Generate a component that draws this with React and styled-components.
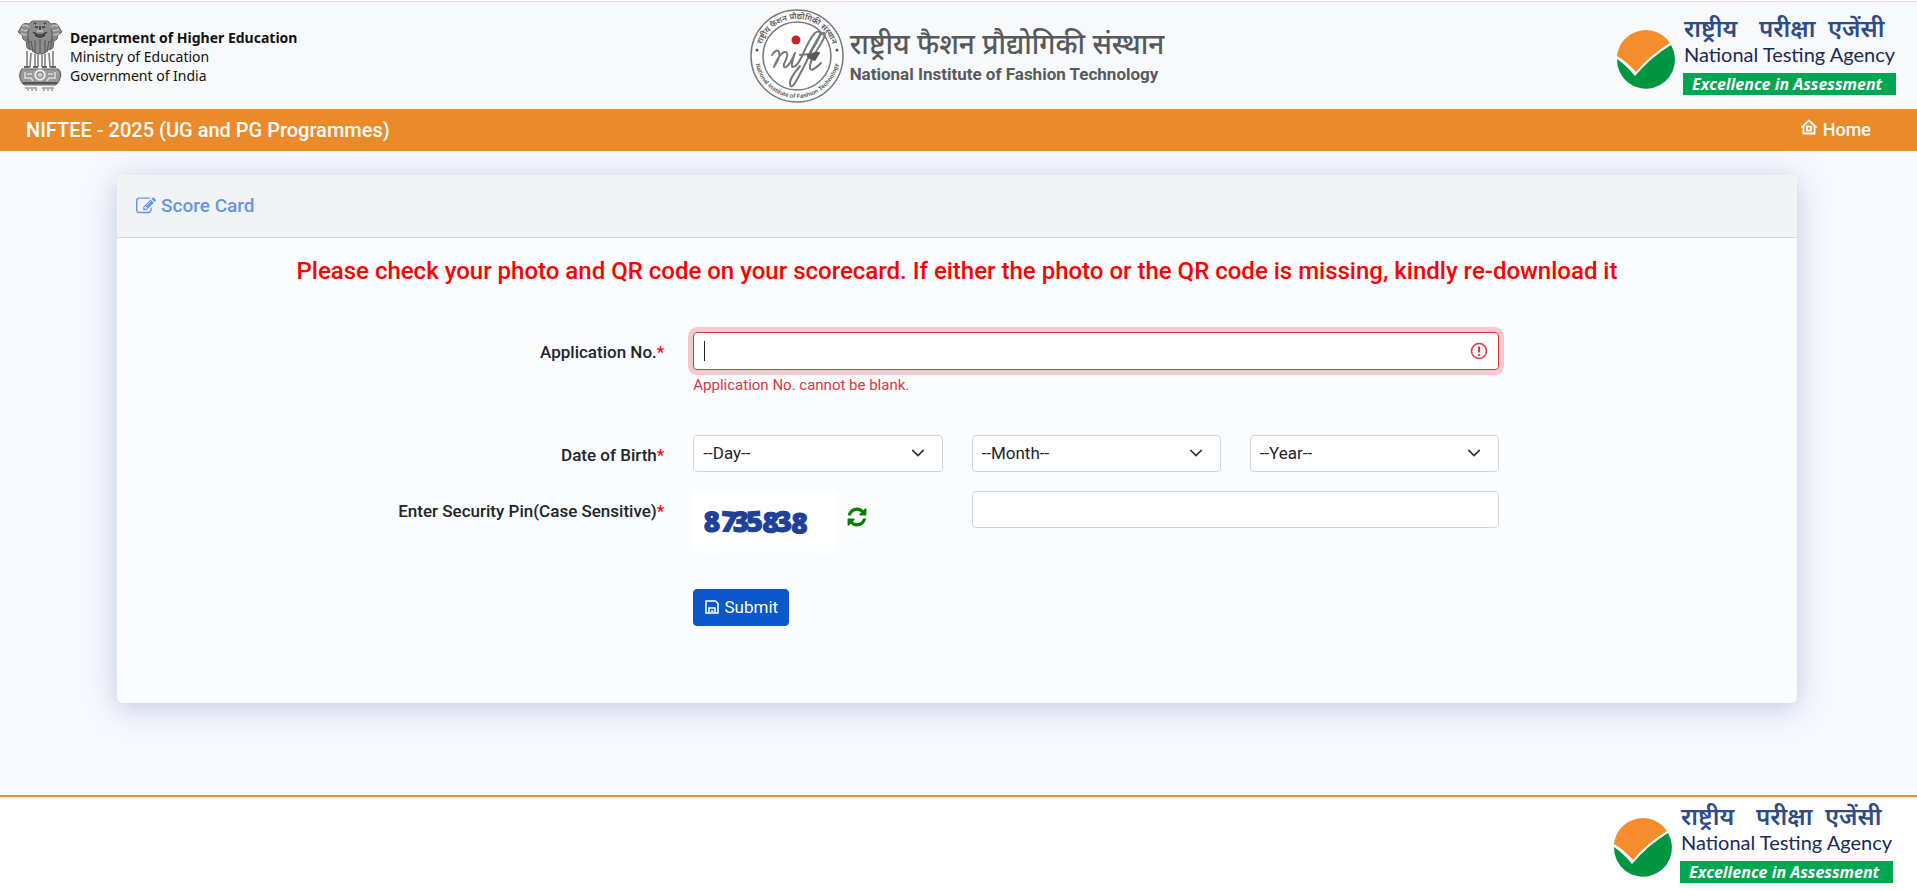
import React from 'react';
import styled, { createGlobalStyle } from 'styled-components';


//-- STYLES --//
const colors = {
  orange: '#eb8a2b',
  ink: '#212529',
  danger: '#dc3545',
  border: '#ced4da',
  link: '#6495ed',
  primary: '#0b57cb',
};

const GlobalStyle = createGlobalStyle`
  *, *::before, *::after {
    box-sizing: border-box;
  }

  body {
    margin: 0;
    background: #f8f9fe;
    color: ${colors.ink};
    font-family: Roboto, 'Liberation Sans', sans-serif;
    font-size: 17px;
    line-height: 24px;
  }
`;

const Page = styled.div`
  display: flex;
  flex-direction: column;
  min-height: 100vh;
`;

const Header = styled.header`
  display: grid;
  grid-template-columns: 1fr auto 1fr;
  align-items: center;
  height: 109px;
  padding: 2px 20px 0 17px;
  border-top: 1px solid #fff;
  background: #f8f9fb;
  box-shadow: inset 0 1px #f0d8ea;
`;

const Ministry = styled.div`
  display: flex;
  align-items: center;
  gap: 7px;
`;

const MinistryText = styled.p`
  margin: 0;
  color: #111;
  font-family: 'Noto Sans', sans-serif;
  font-size: 14px;
  line-height: 19px;
`;

const Institute = styled.div`
  display: flex;
  align-items: center;
  gap: 6px;
`;

const InstituteText = styled.div`
  display: flex;
  flex-direction: column;
  color: #58595b;
`;

const InstituteHindi = styled.span`
  font-family: 'Noto Sans', 'Noto Sans Devanagari', sans-serif;
  font-size: 28px;
  font-weight: 500;
  line-height: 36px;
`;

const InstituteName = styled.span`
  font-family: Roboto, 'Liberation Sans', sans-serif;
  font-size: 17px;
  font-weight: 700;
  line-height: 26px;
`;

const AgencySlot = styled.div`
  display: flex;
  justify-self: end;
  padding-bottom: 3px;
`;

const Bar = styled.nav`
  display: flex;
  align-items: center;
  justify-content: space-between;
  height: 42px;
  padding: 0 46px 0 26px;
  background: ${colors.orange};
  color: #fff;
`;

const BarTitle = styled.h1`
  margin: 0;
  font-size: 20px;
  font-weight: 500;
`;

const HomeLink = styled.a`
  display: flex;
  align-items: center;
  gap: 6px;
  color: #fff;
  font-size: 18px;
  font-weight: 500;
  text-decoration: none;

  svg {
    margin-bottom: 6px;
  }
`;

const Main = styled.main`
  flex: 1;
  padding: 24px 120px 92px 117px;
`;

const Card = styled.section`
  min-height: 528px;
  border-radius: 6px;
  background: #fbfcfe;
  box-shadow: 0 5px 30px rgba(65, 100, 160, .32);
  overflow: hidden;
`;

const CardHeader = styled.h2`
  display: flex;
  align-items: center;
  gap: 5px;
  height: 63px;
  margin: 0;
  padding: 0 19px;
  border-bottom: 1px solid #d3d5d8;
  background: #f2f3f5;
  color: ${colors.link};
  font-size: 19px;
  font-weight: 500;
`;

const Notice = styled.p`
  margin: 18px 0 46px;
  color: #f00;
  font-size: 24px;
  font-weight: 500;
  line-height: 30px;
  text-align: center;
`;

const Form = styled.form`
  padding: 0 20px;
`;

const Row = styled.div`
  display: grid;
  grid-template-columns: repeat(6, 1fr);
  column-gap: 29px;
  align-items: start;
  min-height: ${props => props.$height};
`;

const Label = styled.label`
  grid-column: span 2;
  padding-top: 8px;
  font-weight: 500;
  text-align: right;
`;

const Star = styled.span`
  color: #f00;
`;

const Field = styled.div`
  position: relative;
  grid-column: span ${props => props.$span || 1};
`;

const Input = styled.input`
  display: block;
  width: 100%;
  height: ${props => (props.$invalid ? '38px' : '37px')};
  padding: 6px 11px;
  border: 1px solid ${props => (props.$invalid ? colors.danger : colors.border)};
  border-radius: 4px;
  outline: none;
  background: #fff;
  color: ${colors.ink};
  caret-color: transparent;
  font: inherit;
  box-shadow: ${props => (props.$invalid ? '0 0 0 5px rgba(220, 53, 69, .25)' : 'none')};
`;

// steady caret in place of the browser's blinking one
const Caret = styled.span`
  position: absolute;
  top: 9px;
  left: 11px;
  width: 1px;
  height: 20px;
  background: ${colors.ink};
`;

const InvalidIcon = styled.svg`
  position: absolute;
  top: 10px;
  right: 11px;
`;

const Feedback = styled.div`
  margin-top: 3px;
  color: ${colors.danger};
  font-size: 15px;
`;

const Select = styled.select`
  display: block;
  width: 100%;
  height: 37px;
  padding: 0 36px 2px 9px;
  border: 1px solid ${colors.border};
  border-radius: 4px;
  appearance: none;
  background: #fff;
  color: ${colors.ink};
  font: inherit;
`;

const Chevron = styled.svg`
  position: absolute;
  top: 11px;
  right: 18px;
  pointer-events: none;
`;

const Captcha = styled.div`
  display: flex;
  align-items: flex-start;
  gap: 9px;
`;

const Refresh = styled.button`
  display: flex;
  margin-top: 15px;
  padding: 0;
  border: 0;
  background: none;
  color: green;
  cursor: pointer;
`;

const Submit = styled.button`
  display: flex;
  grid-column: 3;
  align-items: center;
  justify-content: center;
  gap: 6px;
  justify-self: start;
  width: 96px;
  height: 37px;
  padding: 0 0 2px;
  border: 1px solid #0a53c4;
  border-radius: 4px;
  background: ${colors.primary};
  color: #fff;
  font: inherit;
  cursor: pointer;
`;

const Footer = styled.footer`
  display: flex;
  justify-content: flex-end;
  height: 96px;
  padding: 6px 23px 0;
  border-top: 2px solid #ee8c2d;
  background: #fff;
`;


//-- DRAWINGS --//
const Emblem = () => (
  <svg width="46" height="72" viewBox="0 0 46 72" fill="none" stroke="#666" role="img" aria-label="Emblem of India">
    <path d="M15 1h16l3 3q6-2 8 3l3 5-4 3q0 5-4 6l-1 7-5 2-3 3q-5 2-10 0l-3-3-5-2-1-7q-4-1-4-6l-4-3 3-5q2-5 8-3z" fill="#8d8d8d" strokeWidth="1" />
    <path d="M4 9q3 3 7 1M4 14l6 1M42 9q-4 3-7 1M42 14l-6 1M5 6q4-2 7 1M41 6q-4-2-7 1" stroke="#bbb" strokeWidth="1.5" />
    <path d="M17 3q6 4 12 0M18 7h3m4 0h3M23 5v5M16 12q7 6 14 0M18 15q5 4 10 0" stroke="#333" strokeWidth="1.4" />
    <path d="M19 5h8M20 11h6" stroke="#ddd" strokeWidth="1.2" />
    <path d="M12 9q-3 7 1 14M34 9q3 7-1 14M10 18l3 12M14 21l2 11M18 20v13M23 19v14M28 20v13M32 21l-2 11M36 18l-3 12" stroke="#555" strokeWidth="1" />
    <path d="M10 31v16M14 33l-1 14M18 34v13M21 34v13M25 34v13M28 34v13M32 33l1 14M36 31v16" stroke="#888" strokeWidth="1.7" />
    <path d="M7 47h6m3 0h5m4 0h5m3 0h6" strokeWidth="2" />
    <path d="M5 49h36q4 4 2 9-1 5-5 7H8q-4-2-5-7-1-5 2-9z" fill="#999" strokeWidth="1.2" />
    <circle cx="23" cy="55" r="5" fill="#ccc" strokeWidth="1.6" stroke="#eee" />
    <circle cx="23" cy="55" r="3" strokeWidth=".8" />
    <path d="M8 52v6h6l2 3M10 54h5M38 52v6h-6l-2 3M36 54h-5" stroke="#ddd" strokeWidth="1.5" />
    <path d="M6 63h34" stroke="#555" strokeWidth="2" />
    <path d="M8 68h12M25 68h12M11 69v2m4-2v2m4-2v2m8-2v2m4-2v2m4-2v2" stroke="#666" strokeWidth="1" />
  </svg>
);

const InstituteSeal = () => (
  <svg width="94" height="94" viewBox="0 0 94 94" role="img" aria-label="NIFT">
    <defs>
      <path id="seal-top" d="M10 47a37 37 0 0 1 74 0" />
      <path id="seal-bottom" d="M5 47a42 42 0 0 0 84 0" />
    </defs>
    <circle cx="47" cy="47" r="46" fill="#fff" stroke="#77787a" strokeWidth="1.5" />
    <circle cx="47" cy="47" r="34" fill="none" stroke="#77787a" strokeWidth="1.5" />
    <g fill="#58595b" textAnchor="middle">
      <text fontSize="8" fontWeight="600" fontFamily="'Noto Sans', sans-serif">
        <textPath href="#seal-top" startOffset="50%">राष्ट्रीय फैशन प्रौद्योगिकी संस्थान</textPath>
      </text>
      <text fontSize="6" fontWeight="700" fontFamily="'Liberation Sans', sans-serif">
        <textPath href="#seal-bottom" startOffset="50%">National Institute of Fashion Technology</textPath>
      </text>
    </g>
    <circle cx="7" cy="41" r="1.5" fill="#58595b" />
    <circle cx="87" cy="41" r="1.5" fill="#58595b" />
    <g fill="none" stroke="#77787a" strokeWidth="2" strokeLinecap="round" strokeLinejoin="round">
      <path d="M22 46q5-7 7-3t-5 15q6-15 11-15t-1 12q-1 4 2 3 4-2 9-14-5 14-2 14 4 0 9-11 8-18 13-23 4-3 5 0t-8 17Q52 62 45 74q-4 6-5 1t10-18" />
      <path d="M58 47q9-16 12-21 4-4 5-1 0 4-8 16-8 13-7 18t11-5M50 46l19-2" />
    </g>
    <path d="M57 48q1-5 5-3 4-4 8-1l-5 8q-5-1-8-4z" fill="#58595b" />
    <circle cx="46" cy="31" r="4.5" fill="#c1272d" />
  </svg>
);

const AgencyLogo = () => (
  <svg width="280" height="80" viewBox="0 0 280 80" overflow="visible" role="img" aria-label="National Testing Agency">
    <path d="M0 41A29 29 0 0 1 53 28Q33 40 19 57Q9 46 0 41Z" fill="#f58d2d" />
    <path d="M0 44Q9 50 18 61Q34 42 54 30A29 29 0 1 1 0 44Z" fill="#009540" />
    <rect x="66" y="58" width="213" height="22" fill="#00a651" />
    <text y="22" fill="#2f4c88" fontFamily="'Noto Sans', sans-serif" fontSize="24" fontWeight="600">
      <tspan x="67">राष्ट्रीय</tspan>
      <tspan x="142">परीक्षा</tspan>
      <tspan x="211">एजेंसी</tspan>
    </text>
    <text x="67" y="47" fill="#1b2a57" fontFamily="Lato, sans-serif" fontSize="20">National Testing Agency</text>
    <text x="75" y="75" fill="#fff" fontFamily="'Open Sans', sans-serif" fontSize="16" fontWeight="700" fontStyle="italic">Excellence in Assessment</text>
  </svg>
);

const HomeIcon = () => (
  <svg width="16" height="16" viewBox="0 0 16 16" fill="none" stroke="#fff" strokeWidth="1.8" aria-hidden="true">
    <path d="M.5 8.500 8 1.500l7.500 7M2.500 7v7.500h11V7" />
    <rect x="6" y="7.5" width="4" height="4" />
  </svg>
);

const EditIcon = () => (
  <svg width="20" height="20" viewBox="0 0 1792 1792" fill="currentColor" aria-hidden="true">
    <path d="M888 1184l116-116-152-152-116 116v56h96v96h56zm440-720q-16-16-33 1l-350 350q-17 17-1 33t33-1l350-350q17-17 1-33zm80 594v190q0 119-84.500 203.500t-203.500 84.500h-832q-119 0-203.500-84.500t-84.500-203.500v-832q0-119 84.500-203.500t203.500-84.500h832q63 0 117 25 15 7 18 23 3 17-9 29l-49 49q-14 14-32 8-23-6-45-6h-832q-66 0-113 47t-47 113v832q0 66 47 113t113 47h832q66 0 113-47t47-113v-126q0-13 9-22l64-64q15-15 35-7t20 29zm-96-738l288 288-672 672h-288v-288zm444 132l-92 92-288-288 92-92q28-28 68-28t68 28l152 152q28 28 28 68t-28 68z" />
  </svg>
);

const RefreshIcon = () => (
  <svg width="22" height="22" viewBox="0 0 1792 1792" fill="currentColor" aria-hidden="true">
    <path d="M1639 1056q0 5-1 7-64 268-268 434.500t-478 166.500q-146 0-282.500-55t-243.500-157l-129 129q-19 19-45 19t-45-19-19-45v-448q0-26 19-45t45-19h448q26 0 45 19t19 45-19 45l-137 137q71 66 161 102t187 36q134 0 250-65t186-179q11-17 53-117 8-23 30-23h192q13 0 22.500 9.500t9.500 22.500zm25-800v448q0 26-19 45t-45 19h-448q-26 0-45-19t-19-45 19-45l138-138q-148-137-349-137-134 0-250 65t-186 179q-11 17-53 117-8 23-30 23h-199q-13 0-22.500-9.500t-9.500-22.500v-7q65-268 270-434.500t480-166.500q146 0 284 55.500t245 156.500l130-129q19-19 45-19t45 19 19 45z" />
  </svg>
);

const SaveIcon = () => (
  <svg width="14" height="14" viewBox="0 0 14 14" fill="none" stroke="currentColor" strokeWidth="1.5" aria-hidden="true">
    <path d="M1 1h9.500L13 3.500V13H1zM4 13V8h6v5M6 11h2.500" />
  </svg>
);

const CaptchaImage = () => (
  <svg width="144" height="60" viewBox="0 0 144 60" role="img" aria-label="Security pin">
    <rect width="144" height="60" fill="#fff" />
    <text
      x="11 27 40 54 69 83 98"
      y="41 40 41 41 41 41 42"
      rotate="-2 5 -2 -4 3 -3 2"
      fill="#20409a"
      stroke="#20409a"
      strokeWidth="1"
      fontFamily="'Open Sans', sans-serif"
      fontSize="28"
      fontWeight="800"
    >
      8735838
    </text>
  </svg>
);


//-- COMPONENTS --//
const DateSelect = ({ name, id }) => (
  <Field>
    <Select id={id} aria-label={name} defaultValue="">
      <option value="">--{name}--</option>
    </Select>
    <Chevron width="14" height="14" viewBox="0 0 16 16" fill="none" stroke="#343a40" strokeWidth="2" strokeLinecap="round" strokeLinejoin="round" aria-hidden="true">
      <path d="m2 5 6 6 6-6" />
    </Chevron>
  </Field>
);

const App = () => {
  return (
    <Page>
      <GlobalStyle />
      <Header>
        <Ministry>
          <Emblem />
          <MinistryText>
            <b>Department of Higher Education</b><br />
            Ministry of Education<br />
            Government of India
          </MinistryText>
        </Ministry>
        <Institute>
          <InstituteSeal />
          <InstituteText>
            <InstituteHindi lang="hi">राष्ट्रीय फैशन प्रौद्योगिकी संस्थान</InstituteHindi>
            <InstituteName>National Institute of Fashion Technology</InstituteName>
          </InstituteText>
        </Institute>
        <AgencySlot>
          <AgencyLogo />
        </AgencySlot>
      </Header>
      <Bar>
        <BarTitle>NIFTEE - 2025 (UG and PG Programmes)</BarTitle>
        <HomeLink href="#"><HomeIcon />Home</HomeLink>
      </Bar>
      <Main>
        <Card>
          <CardHeader><EditIcon />Score Card</CardHeader>
          <Notice>Please check your photo and QR code on your scorecard. If either the photo or the QR code is missing, kindly re-download it</Notice>
          <Form onSubmit={e => e.preventDefault()}>
            <Row $height="103px">
              <Label htmlFor="application">Application No.<Star>*</Star></Label>
              <Field $span={3}>
                <Input id="application" $invalid autoFocus aria-describedby="application-error" />
                <Caret />
                <InvalidIcon width="18" height="18" viewBox="0 0 18 18" fill="none" stroke={colors.danger} strokeWidth="1.5" aria-hidden="true">
                  <circle cx="9" cy="9" r="7.5" />
                  <path d="M9 4.500v6M9 12v1.800" strokeWidth="2" />
                </InvalidIcon>
                <Feedback id="application-error">Application No. cannot be blank.</Feedback>
              </Field>
            </Row>
            <Row $height="56px">
              <Label htmlFor="day">Date of Birth<Star>*</Star></Label>
              <DateSelect name="Day" id="day" />
              <DateSelect name="Month" id="month" />
              <DateSelect name="Year" id="year" />
            </Row>
            <Row $height="98px">
              <Label htmlFor="pin">Enter Security Pin(Case Sensitive)<Star>*</Star></Label>
              <Captcha>
                <CaptchaImage />
                <Refresh type="button" aria-label="Refresh security pin"><RefreshIcon /></Refresh>
              </Captcha>
              <Field $span={2}>
                <Input id="pin" />
              </Field>
            </Row>
            <Row $height="37px">
              <Submit type="submit"><SaveIcon />Submit</Submit>
            </Row>
          </Form>
        </Card>
      </Main>
      <Footer>
        <AgencyLogo />
      </Footer>
    </Page>
  );
};

export default App;
